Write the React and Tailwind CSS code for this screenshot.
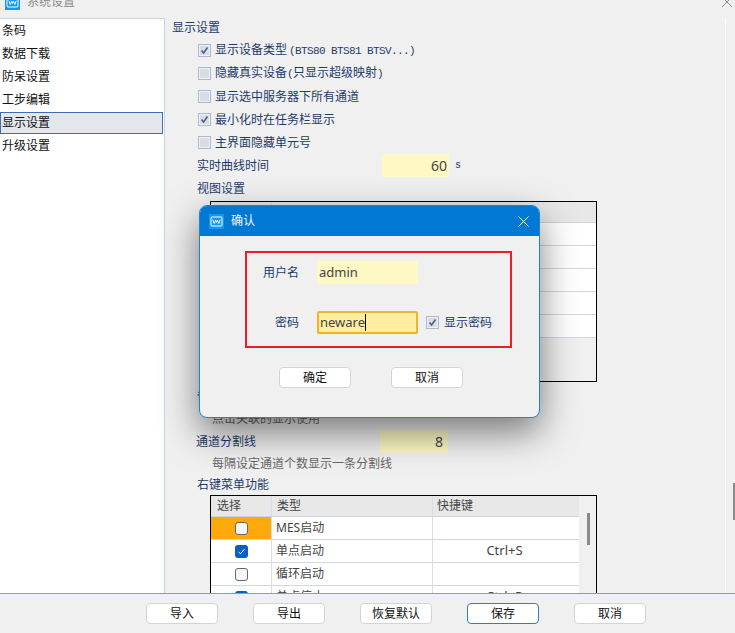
const menuItems = ['条码', '数据下载', '防呆设置', '工步编辑', '显示设置', '升级设置'];
const footerButtons = ['导入', '导出', '恢复默认', '保存', '取消'];
const menuRows = [
  { name: 'MES启动', checked: false, key: '', active: true },
  { name: '单点启动', checked: true, key: 'Ctrl+S' },
  { name: '循环启动', checked: false, key: '' },
  { name: '单点停止', checked: true, key: 'Ctrl+P' },
];

const Logo = ({ bg }) => (
  <svg width="15" height="15" viewBox="0 0 15 15" className="shrink-0">
    <rect width="15" height="15" fill={bg} />
    <rect x="2" y="3" width="11" height="9" rx="1" fill="none" stroke="#fff" strokeWidth="1" />
    <path d="M3.8 5.6 L5.2 9.6 L6.6 6.2 L7.5 8.4 L8.4 6.2 L9.8 9.6 L11.2 5.6" fill="none" stroke="#fff" strokeWidth="0.9" />
  </svg>
);

const OldCheck = ({ checked }) => (
  <span className="w-[13px] h-[13px] shrink-0 border border-[#a9bad2] bg-[#eef0f3] p-[1px] flex">
    <span className="flex-1 bg-[#d9dde3] flex items-center justify-center">
      {checked && (
        <svg width="9" height="9" viewBox="0 0 9 9">
          <path d="M1.5 4.5 L3.6 7 L7.5 1.5" fill="none" stroke="#4c5c78" strokeWidth="1.5" />
        </svg>
      )}
    </span>
  </span>
);

const CheckRow = ({ checked, children }) => (
  <div className="h-[23px] pl-[33px] flex items-center gap-[4px]">
    <OldCheck checked={checked} />
    <span>{children}</span>
  </div>
);

const Mono = ({ children }) => (
  <span className="font-['Liberation_Mono',monospace] text-[11px] tracking-[-0.6px]">{children}</span>
);

const TableCheck = ({ checked }) =>
  checked ? (
    <span className="w-[13px] h-[13px] rounded-[3px] bg-[#0a5fc0] flex items-center justify-center">
      <svg width="9" height="9" viewBox="0 0 9 9">
        <path d="M1.5 4.8 L3.5 6.8 L7.5 2" fill="none" stroke="#fff" strokeWidth="1" />
      </svg>
    </span>
  ) : (
    <span className="w-[13px] h-[13px] rounded-[3px] border border-[#666] bg-[#f6f6f6]" />
  );

const Button = ({ label, primary }) => (
  <button
    className={`w-[72px] h-[21px] bg-white rounded-[4px] border text-[12px] text-[#111] flex items-center justify-center ${
      primary ? 'border-[#2f7fbd]' : 'border-[#d4d4d4]'
    }`}
  >
    {label}
  </button>
);

const App = () => {
  return (
    <div className="relative w-[735px] h-[633px] overflow-hidden bg-[#f0f0f0] text-[12px] text-[#1c3a6b] font-['Noto_Sans','Noto_Sans_CJK_SC',sans-serif]">
      {/* title bar, cut off by the top of the picture */}
      <div className="h-[18px] pl-[5px] pr-[3px] flex">
        <div className="h-[4px] flex-1 flex items-center gap-[7px]">
          <Logo bg="#1597ea" />
          <span className="text-[#8a8a8a]">系统设置</span>
          <svg width="10" height="10" viewBox="0 0 10 10" className="ml-auto">
            <path d="M0 0 L10 10 M10 0 L0 10" stroke="#8f8f8f" strokeWidth="1" />
          </svg>
        </div>
      </div>

      <div className="flex h-[575px]">
        <div className="w-[165px] shrink-0 bg-white border-r border-t border-[#c3d2e4]">
          {menuItems.map((item) => (
            <div key={item} className="h-[23px] flex items-center">
              {item === '显示设置' ? (
                <span className="w-[163px] h-[22px] pl-[1px] flex items-center bg-[#e2e7eb] border border-[#3f6fa8] text-[#111]">
                  {item}
                </span>
              ) : (
                <span className="pl-[2px] text-[#111]">{item}</span>
              )}
            </div>
          ))}
        </div>

        <div className="w-[560px] shrink-0 overflow-hidden">
          <div className="h-[23px] -mt-[2px] pl-[7px] flex items-center">显示设置</div>
          <CheckRow checked>
            显示设备类型<span className="ml-[2px]"><Mono>(BTS80 BTS81 BTSV...)</Mono></span>
          </CheckRow>
          <CheckRow>
            隐藏真实设备<Mono>(</Mono>只显示超级映射<Mono>)</Mono>
          </CheckRow>
          <CheckRow>显示选中服务器下所有通道</CheckRow>
          <CheckRow checked>最小化时在任务栏显示</CheckRow>
          <CheckRow>主界面隐藏单元号</CheckRow>
          <div className="h-[23px] pl-[32px] flex items-center">
            <span className="w-[185px]">实时曲线时间</span>
            <span className="w-[67px] h-[23px] pr-[2px] bg-[#fdf8c4] text-[14px] text-[#444] flex items-center justify-end">60</span>
            <span className="ml-[6px] font-['Liberation_Mono',monospace] text-[10px]">s</span>
          </div>
          <div className="h-[23px] pl-[32px] flex items-center">视图设置</div>

          <div className="mt-[1px] ml-[45px] w-[387px] h-[181px] border border-black">
            <div className="h-[21px] bg-[#e8e8e8] border-b border-[#ccd3dd] flex">
              <span className="w-[61px] border-r border-[#d8dee6]" />
            </div>
            {[0, 1, 2, 3, 4].map((row) => (
              <div key={row} className="h-[23px] bg-white border-b border-[#d3d8e0]" />
            ))}
          </div>

          <div className="mt-[2px] h-[23px] pl-[32px] flex items-center">备注</div>
          <div className="h-[23px] pl-[47px] flex items-center text-[#666]">点击关联的显示使用</div>
          <div className="h-[23px] pl-[31px] flex items-center">
            <span className="w-[184px]">通道分割线</span>
            <span className="w-[68px] h-[23px] pr-[5px] bg-[#fdf8c4] text-[14px] text-[#444] flex items-center justify-end">8</span>
          </div>
          <div className="h-[21px] pl-[47px] flex items-center text-[#666]">每隔设定通道个数显示一条分割线</div>
          <div className="h-[21px] pl-[32px] flex items-center">右键菜单功能</div>

          <div className="ml-[45px] w-[387px] border border-black flex">
            <div className="w-[368px]">
              <div className="h-[21px] bg-[#e8e8e8] border-b border-[#ccd3dd] flex items-center text-[#444]">
                <span className="w-[61px] pl-[6px] h-full flex items-center border-r border-[#d8dee6]">选择</span>
                <span className="w-[161px] pl-[5px] h-full flex items-center border-r border-[#d8dee6]">类型</span>
                <span className="pl-[4px]">快捷键</span>
              </div>
              {menuRows.map((row) => (
                <div key={row.name} className="h-[23px] bg-white border-b border-[#d3d8e0] flex items-center text-[#444]">
                  <span
                    className={`w-[61px] h-full flex items-center justify-center border-r border-[#d8dee6] ${
                      row.active ? 'bg-[#ffa90a]' : ''
                    }`}
                  >
                    <TableCheck checked={row.checked} />
                  </span>
                  <span className="w-[161px] pl-[4px] h-full flex items-center border-r border-[#d8dee6]">{row.name}</span>
                  <span className="flex-1 pr-[3px] text-center text-[13px]">{row.key}</span>
                </div>
              ))}
            </div>
            <div className="flex-1 pl-[8px] pt-[17px]">
              <div className="w-[3px] h-[32px] bg-[#8a8a8a]" />
            </div>
          </div>
        </div>

        <div className="flex-1 border-l border-white pl-[7px] pt-[465px]">
          <div className="w-[2px] h-[37px] bg-[#8a8a8a]" />
        </div>
      </div>

      <div className="h-[40px] border-t border-[#7f9fc9] pt-[9px] pl-[146px] flex gap-[35px] relative">
        {footerButtons.map((label) => (
          <Button key={label} label={label} primary={label === '保存'} />
        ))}
      </div>

      {/* confirm dialog */}
      <div className="absolute left-[199px] top-[205px] w-[341px] h-[213px] rounded-[8px] border border-[#1a86d2] bg-[#f0f0f0] overflow-hidden shadow-[0_14px_36px_rgba(0,0,0,0.5)]">
        <div className="h-[30px] bg-[#0078d4] pl-[9px] pr-[10px] flex items-center gap-[7px] text-[#f2f7fc]">
          <Logo bg="#1597ea" />
          <span>确认</span>
          <svg width="11" height="11" viewBox="0 0 11 11" className="ml-auto">
            <path d="M0.5 0.5 L10.5 10.5 M10.5 0.5 L0.5 10.5" stroke="#fff" strokeWidth="1" />
          </svg>
        </div>

        <div className="ml-[45px] mt-[15px] w-[267px] h-[97px] border-2 border-[#ee1c25] pt-[8px]">
          <div className="h-[23px] flex items-center">
            <span className="w-[52px] text-right">用户名</span>
            <span className="ml-[18px] w-[101px] h-[23px] pl-[2px] bg-[#fdf8c4] text-[13px] text-[#444] flex items-center">admin</span>
          </div>
          <div className="mt-[27px] h-[23px] flex items-center">
            <span className="w-[52px] text-right">密码</span>
            <span className="ml-[18px] w-[101px] h-[23px] pl-[1px] bg-[#ffeea0] border-2 border-[#f0b429] rounded-[2px] text-[13px] text-[#444] flex items-center">
              neware
              <span className="w-[1px] h-[17px] bg-black" />
            </span>
            <span className="ml-[8px] mr-[5px]"><OldCheck checked /></span>
            <span>显示密码</span>
          </div>
        </div>

        <div className="mt-[19px] ml-[79px] flex gap-[40px]">
          <Button label="确定" />
          <Button label="取消" />
        </div>
      </div>
    </div>
  );
};

export default App;
